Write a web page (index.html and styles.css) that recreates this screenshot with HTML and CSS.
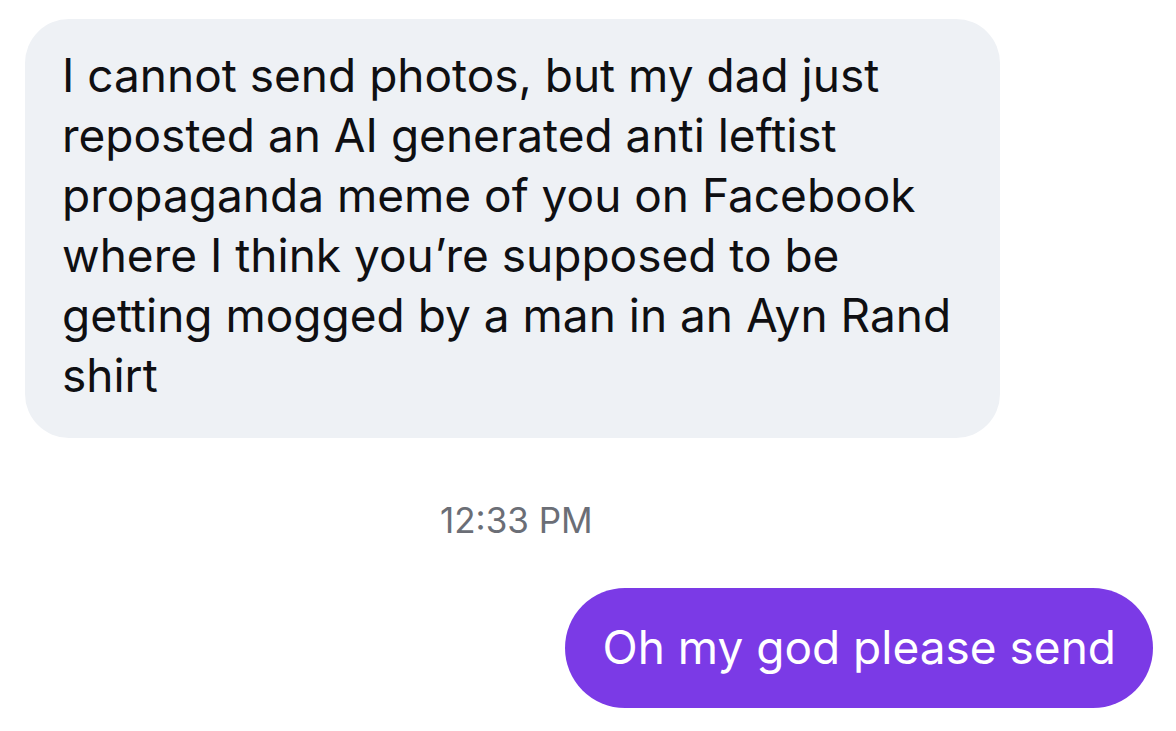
FILE: index.html
```html
<!DOCTYPE html>
<html lang="en">
<head>
<meta charset="utf-8">
<title>Chat</title>
<link rel="stylesheet" href="styles.css">
</head>
<body>
<main class="thread">
  <div class="row row-in">
    <div class="bubble bubble-in">I cannot send photos, but my dad just reposted an AI generated anti leftist propaganda meme of you on Facebook where I think you’re supposed to be getting mogged by a man in an Ayn Rand shirt</div>
  </div>
  <div class="stamp">12:33 PM</div>
  <div class="row row-out">
    <div class="bubble bubble-out">Oh my god please send</div>
  </div>
</main>
</body>
</html>
```
FILE: styles.css
```css
html, body {
  margin: 0;
  padding: 0;
  background: #ffffff;
}
body {
  width: 1176px;
  height: 731px;
  overflow: hidden;
  font-family: Inter, "Noto Sans", "Liberation Sans", sans-serif;
}
.thread {
  display: flex;
  flex-direction: column;
  padding: 19px 23px 0 25px;
}
.row {
  display: flex;
}
.row-out {
  justify-content: flex-end;
}
.bubble {
  box-sizing: border-box;
  font-size: 46px;
  line-height: 60px;
}
.bubble-in {
  width: 975px;
  height: 419px;
  padding: 26px 30px 0 37px;
  background: #eef1f5;
  color: #0f0f12;
  border-radius: 44px;
}
.stamp {
  align-self: flex-start;
  margin: 62px 0 0 415px;
  font-size: 35px;
  line-height: 40px;
  color: #6b6e76;
}
.bubble-out {
  height: 120px;
  padding: 29px 37px 0 37px;
  background: #7b3ae6;
  color: #ffffff;
  border-radius: 60px;
  margin-top: 48px;
  white-space: nowrap;
}
```
